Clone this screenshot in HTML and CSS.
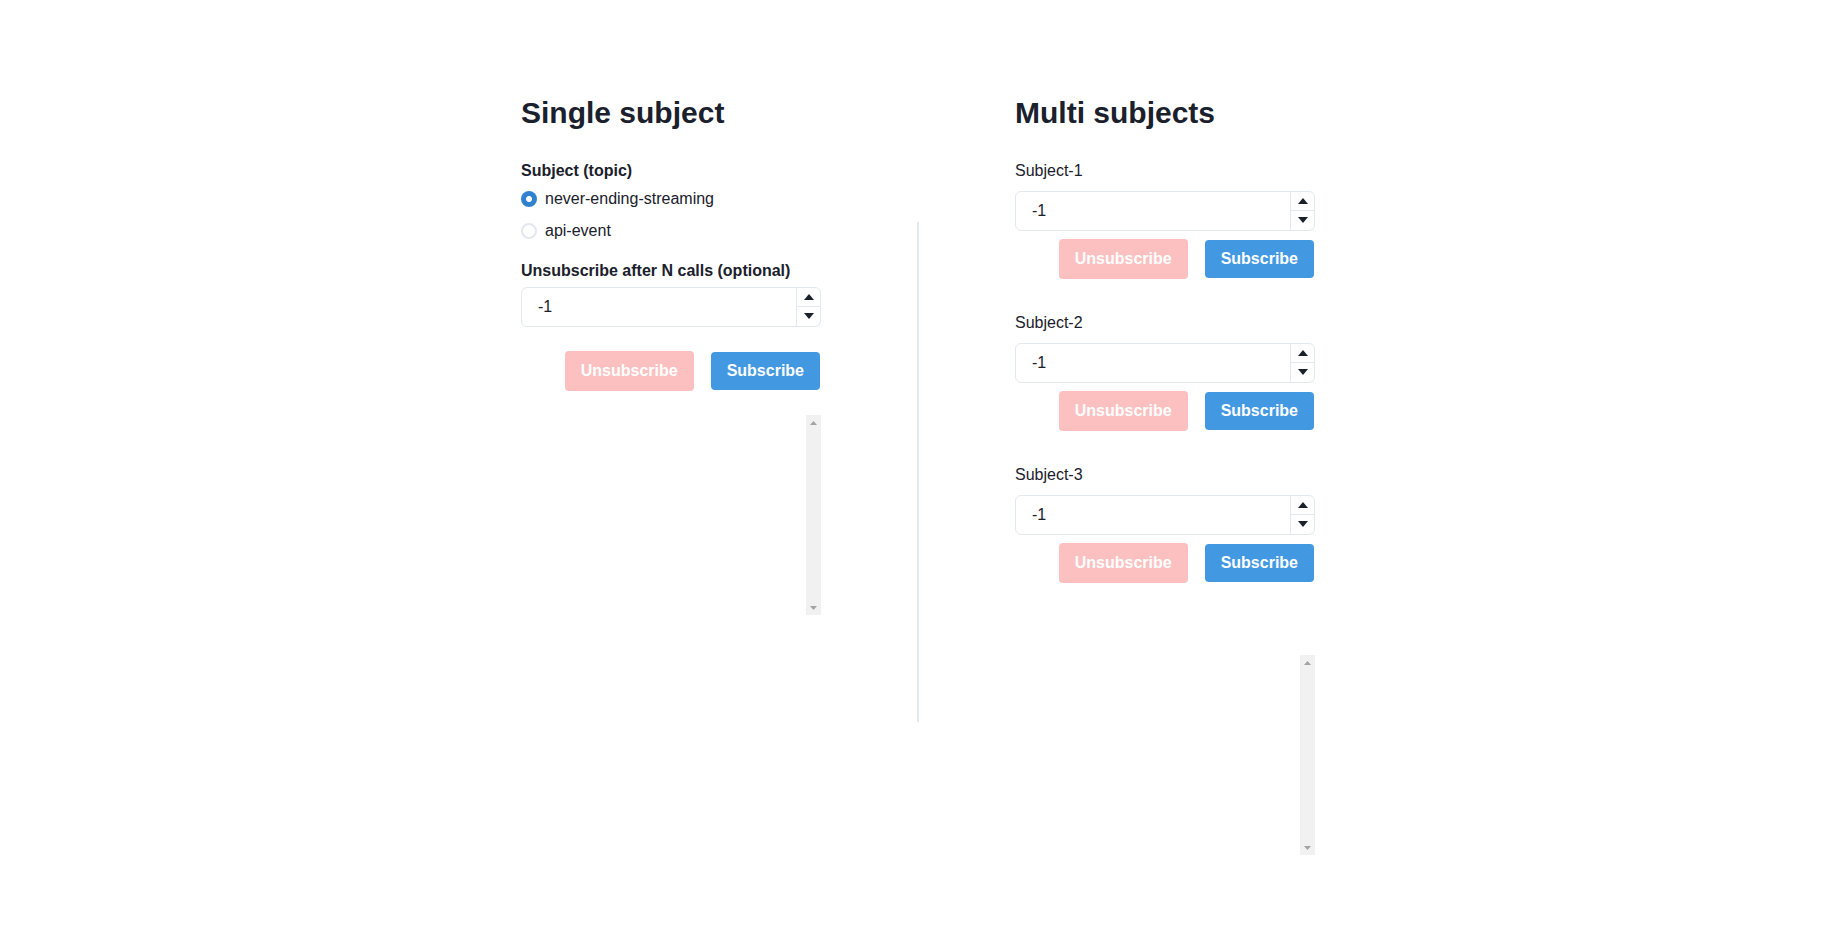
FILE: index.html
```html
<!DOCTYPE html>
<html lang="en">
<head>
<meta charset="utf-8">
<title>Subjects</title>
<link rel="stylesheet" href="styles.css">
</head>
<body>
<main class="page">
  <section class="col">
    <h2 class="title">Single subject</h2>
    <div class="field-label strong first">Subject (topic)</div>
    <div class="radios">
      <label class="radio-row"><input class="radio" type="radio" name="topic" checked><span>never-ending-streaming</span></label>
      <label class="radio-row"><input class="radio" type="radio" name="topic"><span>api-event</span></label>
    </div>
    <div class="field-label strong after-radios">Unsubscribe after N calls (optional)</div>
    <div class="num num-tight">
      <input class="num-text" type="text" value="-1">
      <div class="spin">
        <div class="spin-btn"><svg width="10" height="6" viewBox="0 0 10 6"><path d="M0 6 L5 0 L10 6 Z"/></svg></div>
        <div class="spin-btn bottom"><svg width="10" height="6" viewBox="0 0 10 6"><path d="M0 0 L10 0 L5 6 Z"/></svg></div>
      </div>
    </div>
    <div class="actions wide-gap">
      <button class="btn btn-unsub" disabled>Unsubscribe</button>
      <button class="btn btn-sub">Subscribe</button>
    </div>
    <div class="log log-single">
      <div class="log-body"></div>
      <div class="sbar">
        <div class="sbar-btn"><svg width="7" height="4" viewBox="0 0 7 4"><path d="M0 4 L3.5 0 L7 4 Z"/></svg></div>
        <div class="sbar-btn"><svg width="7" height="4" viewBox="0 0 7 4"><path d="M0 0 L7 0 L3.5 4 Z"/></svg></div>
      </div>
    </div>
  </section>

  <div class="divider"></div>

  <section class="col">
    <h2 class="title">Multi subjects</h2>

    <div class="block first">
      <div class="field-label">Subject-1</div>
      <div class="num">
        <input class="num-text" type="text" value="-1">
        <div class="spin">
          <div class="spin-btn"><svg width="10" height="6" viewBox="0 0 10 6"><path d="M0 6 L5 0 L10 6 Z"/></svg></div>
          <div class="spin-btn bottom"><svg width="10" height="6" viewBox="0 0 10 6"><path d="M0 0 L10 0 L5 6 Z"/></svg></div>
        </div>
      </div>
      <div class="actions">
        <button class="btn btn-unsub" disabled>Unsubscribe</button>
        <button class="btn btn-sub">Subscribe</button>
      </div>
    </div>

    <div class="block">
      <div class="field-label">Subject-2</div>
      <div class="num">
        <input class="num-text" type="text" value="-1">
        <div class="spin">
          <div class="spin-btn"><svg width="10" height="6" viewBox="0 0 10 6"><path d="M0 6 L5 0 L10 6 Z"/></svg></div>
          <div class="spin-btn bottom"><svg width="10" height="6" viewBox="0 0 10 6"><path d="M0 0 L10 0 L5 6 Z"/></svg></div>
        </div>
      </div>
      <div class="actions">
        <button class="btn btn-unsub" disabled>Unsubscribe</button>
        <button class="btn btn-sub">Subscribe</button>
      </div>
    </div>

    <div class="block">
      <div class="field-label">Subject-3</div>
      <div class="num">
        <input class="num-text" type="text" value="-1">
        <div class="spin">
          <div class="spin-btn"><svg width="10" height="6" viewBox="0 0 10 6"><path d="M0 6 L5 0 L10 6 Z"/></svg></div>
          <div class="spin-btn bottom"><svg width="10" height="6" viewBox="0 0 10 6"><path d="M0 0 L10 0 L5 6 Z"/></svg></div>
        </div>
      </div>
      <div class="actions">
        <button class="btn btn-unsub" disabled>Unsubscribe</button>
        <button class="btn btn-sub">Subscribe</button>
      </div>
    </div>

    <div class="log log-multi">
      <div class="log-body"></div>
      <div class="sbar">
        <div class="sbar-btn"><svg width="7" height="4" viewBox="0 0 7 4"><path d="M0 4 L3.5 0 L7 4 Z"/></svg></div>
        <div class="sbar-btn"><svg width="7" height="4" viewBox="0 0 7 4"><path d="M0 0 L7 0 L3.5 4 Z"/></svg></div>
      </div>
    </div>
  </section>
</main>
</body>
</html>
```

FILE: styles.css
```css
* {
  box-sizing: border-box;
}

html, body {
  margin: 0;
  padding: 0;
  background: #ffffff;
}

body {
  font-family: "Liberation Sans", Arial, sans-serif;
  font-size: 16px;
  line-height: 24px;
  color: #1a202c;
}

.page {
  display: flex;
  justify-content: center;
  align-items: flex-start;
  padding: 95px 5px 0 0;
}

.col {
  width: 300px;
  flex: none;
}

.divider {
  flex: none;
  width: 2px;
  height: 500px;
  margin: 127px 96px 0 96px;
  background: #e2e8f0;
}

.title {
  margin: 0;
  font-size: 30px;
  line-height: 36px;
  font-weight: 700;
  color: #1a202c;
}

.field-label {
  height: 24px;
  line-height: 24px;
}

.field-label.strong {
  font-weight: 700;
}

.field-label.first {
  margin-top: 28px;
}

.radios {
  margin-top: 4px;
  display: flex;
  flex-direction: column;
  gap: 8px;
}

.radio-row {
  display: flex;
  align-items: center;
  height: 24px;
}

.radio {
  -webkit-appearance: none;
  appearance: none;
  margin: 0 8px 0 0;
  width: 16px;
  height: 16px;
  border-radius: 50%;
  border: 2px solid #e2e8f0;
  background: #ffffff;
  flex: none;
}

.radio:checked {
  border-color: transparent;
  background: radial-gradient(circle, #ffffff 0, #ffffff 2.6px, #3182ce 3.4px);
}

.after-radios {
  margin-top: 16px;
}

.num {
  margin-top: 8px;
  width: 300px;
  height: 40px;
  display: flex;
  border: 1px solid #e2e8f0;
  border-radius: 6px;
  background: #ffffff;
  overflow: hidden;
}

.num-tight {
  margin-top: 4px;
}

.num-text {
  flex: 1;
  min-width: 0;
  border: none;
  outline: none;
  background: transparent;
  padding: 0 0 0 16px;
  margin: 0;
  font-family: "Liberation Sans", Arial, sans-serif;
  font-size: 16px;
  color: #1a202c;
}

.spin {
  flex: none;
  width: 24px;
  border-left: 1px solid #e2e8f0;
  display: flex;
  flex-direction: column;
}

.spin-btn {
  height: 18px;
  display: flex;
  align-items: center;
  justify-content: center;
}

.spin-btn.bottom {
  height: 19px;
  border-top: 1px solid #e2e8f0;
}

.spin-btn svg {
  display: block;
  fill: #1a202c;
}

.actions {
  margin-top: 8px;
  height: 40px;
  display: flex;
  justify-content: flex-end;
  align-items: center;
  gap: 17px;
  padding-right: 1px;
}

.actions.wide-gap {
  margin-top: 24px;
}

.btn {
  font-family: "Liberation Sans", Arial, sans-serif;
  font-size: 16px;
  font-weight: 700;
  line-height: 24px;
  color: #ffffff;
  border: none;
  border-radius: 4px;
  padding: 0 16px;
  margin: 0;
}

.btn-unsub {
  height: 40px;
  background: #fcc0c0;
}

.btn-sub {
  height: 38px;
  background: #4299e1;
}

.block.first {
  margin-top: 28px;
}

.block + .block {
  margin-top: 32px;
}

.log {
  width: 300px;
  height: 200px;
  display: flex;
  background: #ffffff;
}

.log-body {
  flex: 1;
}

.sbar {
  flex: none;
  width: 15px;
  background: #f1f1f1;
  display: flex;
  flex-direction: column;
  justify-content: space-between;
}

.sbar-btn {
  height: 15px;
  display: flex;
  align-items: center;
  justify-content: center;
}

.sbar-btn svg {
  display: block;
  fill: #a3a3a3;
}

.log-single {
  margin-top: 24px;
}

.log-multi {
  margin-top: 72px;
}
```
